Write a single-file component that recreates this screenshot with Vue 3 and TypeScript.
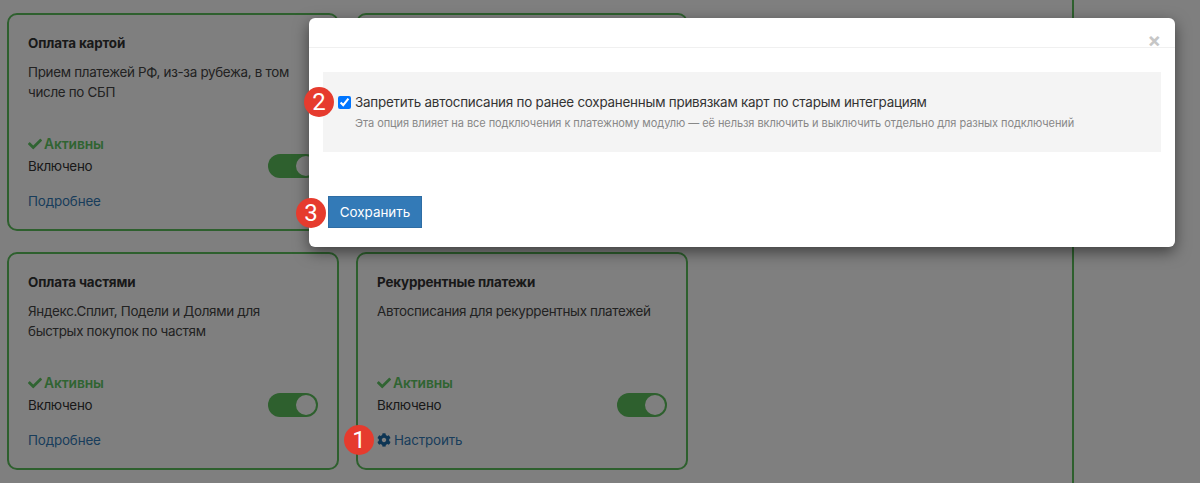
<script setup lang="ts">
interface Card {
  title: string
  text: string
  link: string
  gear?: boolean
}

const cards: Card[] = [
  { title: 'Оплата картой', text: 'Прием платежей РФ, из-за рубежа, в том числе по СБП', link: 'Подробнее' },
  { title: '', text: '', link: '' },
  { title: 'Оплата частями', text: 'Яндекс.Сплит, Подели и Долями для быстрых покупок по частям', link: 'Подробнее' },
  { title: 'Рекуррентные платежи', text: 'Автосписания для рекуррентных платежей', link: 'Настроить', gear: true },
]
</script>

<template>
  <div class="page">
    <main class="content">
      <div class="grid">
        <section v-for="(c, i) in cards" :key="i" class="card">
          <template v-if="c.title">
            <h3 class="title">{{ c.title }}</h3>
            <p class="text">{{ c.text }}</p>
            <div class="status">
              <svg class="check" viewBox="0 0 512 512"><path fill="currentColor" d="M173.898 439.404l-166.4-166.4c-9.997-9.997-9.997-26.206 0-36.204l36.203-36.204c9.997-9.998 26.207-9.998 36.204 0L192 312.69 432.095 72.596c9.997-9.997 26.207-9.997 36.204 0l36.203 36.204c9.997 9.997 9.997 26.206 0 36.204l-294.4 294.401c-9.998 9.997-26.207 9.997-36.204-.001z"/></svg>
              <span>Активны</span>
            </div>
            <div class="row">
              <span>Включено</span>
              <span class="toggle"><span class="knob"></span></span>
            </div>
            <a class="link">
              <svg v-if="c.gear" class="gear" viewBox="0 0 512 512"><path fill="currentColor" d="M487.4 315.7l-42.6-24.6c4.3-23.2 4.3-47 0-70.2l42.6-24.6c4.9-2.8 7.1-8.6 5.5-14-11.1-35.6-30-67.8-54.7-94.6-3.8-4.1-10-5.1-14.8-2.3L380.8 110c-17.9-15.4-38.5-27.3-60.8-35.1V25.8c0-5.6-3.9-10.5-9.4-11.7-36.7-8.2-74.3-7.8-109.2 0-5.5 1.2-9.4 6.1-9.4 11.7V75c-22.2 7.9-42.8 19.8-60.8 35.1L88.7 85.5c-4.9-2.8-11-1.9-14.8 2.3-24.7 26.7-43.6 58.9-54.7 94.6-1.7 5.4.6 11.2 5.5 14L67.3 221c-4.3 23.2-4.3 47 0 70.2l-42.6 24.6c-4.9 2.8-7.1 8.6-5.5 14 11.1 35.6 30 67.8 54.7 94.6 3.8 4.1 10 5.1 14.8 2.3l42.6-24.6c17.9 15.4 38.5 27.3 60.8 35.1v49.2c0 5.6 3.9 10.5 9.4 11.7 36.7 8.2 74.3 7.8 109.2 0 5.5-1.2 9.4-6.1 9.4-11.7v-49.2c22.2-7.9 42.8-19.8 60.8-35.1l42.6 24.6c4.9 2.8 11 1.9 14.8-2.3 24.7-26.7 43.6-58.9 54.7-94.6 1.5-5.5-.7-11.3-5.6-14.1zM256 336c-44.1 0-80-35.9-80-80s35.9-80 80-80 80 35.9 80 80-35.9 80-80 80z"/></svg>
              {{ c.link }}
            </a>
          </template>
        </section>
      </div>
    </main>

    <div class="overlay"></div>

    <div class="modal">
      <div class="modal-head"><span class="close">×</span></div>
      <div class="modal-body">
        <div class="option">
          <label class="option-label">
            <input class="box" type="checkbox" checked />
            <span>Запретить автосписания по ранее сохраненным привязкам карт по старым интеграциям</span>
          </label>
          <p class="hint">Эта опция влияет на все подключения к платежному модулю — её нельзя включить и выключить отдельно для разных подключений</p>
        </div>
        <button class="save" type="button">Сохранить</button>
      </div>
    </div>

    <span class="marker m1">1</span>
    <span class="marker m2">2</span>
    <span class="marker m3">3</span>
  </div>
</template>

<style scoped>
.page {
  position: relative;
  width: 1200px;
  height: 483px;
  overflow: hidden;
  background: #fff;
  font-family: Inter, "Liberation Sans", sans-serif;
  font-size: 13.4px;
  color: #333;
}
.content {
  box-sizing: border-box;
  width: 1074px;
  height: 483px;
  padding: 13px 0 0 7px;
  border-right: 2px solid #5cc05c;
}
.grid {
  display: grid;
  grid-template-columns: 332px 332px;
  grid-template-rows: 218px 218px;
  column-gap: 17px;
  row-gap: 21px;
}
.card {
  box-sizing: border-box;
  display: flex;
  flex-direction: column;
  padding: 18px 19px 0 19px;
  border: 2px solid #5cc05c;
  border-radius: 10px;
  letter-spacing: -0.3px;
}
.title {
  margin: 0;
  font-size: 13.4px;
  line-height: 20px;
  font-weight: 700;
  letter-spacing: -0.15px;
  color: #333;
}
.text {
  margin: 10px 0 0;
  height: 67px;
  line-height: 19.5px;
  color: #444;
}
.status {
  display: flex;
  align-items: center;
  gap: 2px;
  height: 20px;
  margin-top: 4px;
  font-size: 13.8px;
  font-weight: 600;
  letter-spacing: -0.1px;
  color: #60c864;
}
.check {
  width: 14px;
  height: 14px;
}
.row {
  display: flex;
  align-items: center;
  justify-content: space-between;
  height: 24px;
}
.toggle {
  box-sizing: border-box;
  display: flex;
  justify-content: flex-end;
  align-items: center;
  width: 50px;
  height: 24px;
  padding: 1px;
  border-radius: 12px;
  background: #5cc05c;
}
.knob {
  width: 20px;
  height: 20px;
  border-radius: 50%;
  background: #fff;
  margin-right: 1px;
}
.link {
  display: flex;
  align-items: center;
  gap: 3px;
  margin-top: 13px;
  line-height: 20px;
  letter-spacing: -0.15px;
  color: #337ab7;
}
.gear {
  width: 14px;
  height: 14px;
  color: #1a6aa8;
}
.overlay {
  position: absolute;
  inset: 0;
  background: rgba(0, 0, 0, 0.5);
}
.modal {
  position: absolute;
  left: 309px;
  top: 18px;
  width: 866px;
  height: 229px;
  background: #fff;
  border-radius: 6px;
  box-shadow: 0 5px 15px rgba(0, 0, 0, 0.5);
}
.modal-head {
  box-sizing: border-box;
  display: flex;
  justify-content: flex-end;
  align-items: flex-end;
  height: 30px;
  padding-right: 14px;
  border-bottom: 1px solid #f0f0f0;
}
.close {
  font-size: 20px;
  line-height: 20px;
  font-weight: 700;
  color: #c6c6c6;
  margin-bottom: -3px;
}
.modal-body {
  padding: 24px 14px 0;
}
.option {
  box-sizing: border-box;
  height: 80px;
  padding: 20px 15px 0;
  background: #f4f4f4;
}
.option-label {
  display: flex;
  align-items: center;
  gap: 4px;
  line-height: 20px;
  color: #333;
  letter-spacing: -0.22px;
}
.box {
  width: 13px;
  height: 13px;
  margin: 0;
}
.hint {
  margin: 2px 0 0 17px;
  font-size: 11px;
  line-height: 18px;
  letter-spacing: -0.07px;
  color: #888;
}
.save {
  display: block;
  box-sizing: border-box;
  width: 94px;
  height: 32px;
  margin: 44px 0 0 5px;
  padding: 0;
  background: #337ab7;
  border: 1px solid #2e6da4;
  color: #fff;
  font: 13.4px Inter, "Liberation Sans", sans-serif;
}
.marker {
  position: absolute;
  width: 30px;
  height: 30px;
  border-radius: 50%;
  background: #e63b2e;
  color: #fff;
  display: flex;
  align-items: center;
  justify-content: center;
  font-family: Roboto, "Liberation Sans", sans-serif;
  font-size: 24px;
  line-height: 1;
}
.m1 { left: 344px; top: 425px; }
.m2 { left: 304px; top: 87px; }
.m3 { left: 296px; top: 198px; }
</style>
